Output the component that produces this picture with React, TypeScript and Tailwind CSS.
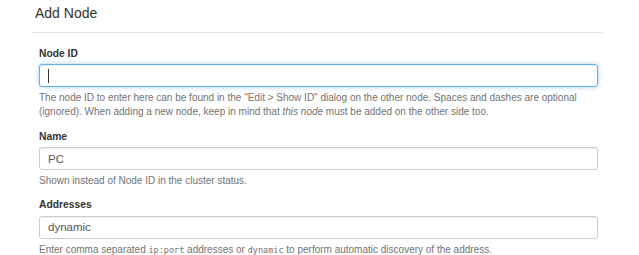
const font = { fontFamily: '"Liberation Sans", Arial, sans-serif' };

const inputCls =
  'block w-full h-[23px] rounded-[3px] border border-[#cccccc] bg-white pl-[8px] text-[11.5px] leading-[21px] text-[#555555] shadow-[inset_0_1px_1px_rgba(0,0,0,0.075)] outline-none';

const Label = ({ children }: { children: React.ReactNode }) => (
  <div className="mb-[3.5px] text-[10.3px] font-bold leading-[14px] text-[#333333]">{children}</div>
);

const Help = ({ children }: { children: React.ReactNode }) => (
  <p className="mt-[4px] text-[10px] leading-[14.3px] text-[#737373]">{children}</p>
);

const Mono = ({ children }: { children: React.ReactNode }) => (
  <span className="text-[8.5px]" style={{ fontFamily: '"DejaVu Sans Mono", "Liberation Mono", monospace' }}>
    {children}
  </span>
);

export default function App() {
  return (
    <div className="w-[639px] h-[255px] overflow-hidden bg-white" style={font}>
      <div className="ml-[31px] w-[572px]">
        {/* header */}
        <div className="h-[33px] border-b border-[#e5e5e5] pl-[4px] pt-[2.5px]">
          <h4 className="text-[14px] leading-[20px] text-[#333333]">Add Node</h4>
        </div>

        {/* body */}
        <div className="pl-[8px] pr-[5px] pt-[13.5px]">
          <div className="mb-[10px]">
            <Label>Node ID</Label>
            <div className="flex h-[23px] w-full items-center rounded-[3px] border border-[#66afe9] bg-white pl-[8px] shadow-[inset_0_1px_1px_rgba(0,0,0,0.075),0_0_5px_rgba(102,175,233,0.6)]">
              <span className="block h-[14px] w-px bg-[#333333]" />
            </div>
            <Help>
              The node ID to enter here can be found in the "Edit &gt; Show ID" dialog on the other node. Spaces and dashes are optional
              <br />
              (ignored). When adding a new node, keep in mind that <em>this node</em> must be added on the other side too.
            </Help>
          </div>

          <div className="mb-[10px]">
            <Label>Name</Label>
            <input className={inputCls} style={font} defaultValue="PC" readOnly />
            <Help>Shown instead of Node ID in the cluster status.</Help>
          </div>

          <div className="mb-[10px]">
            <Label>Addresses</Label>
            <input className={inputCls} style={font} defaultValue="dynamic" readOnly />
            <Help>
              Enter comma separated <Mono>ip:port</Mono> addresses or <Mono>dynamic</Mono> to perform automatic discovery of the address.
            </Help>
          </div>
        </div>
      </div>
    </div>
  );
}
